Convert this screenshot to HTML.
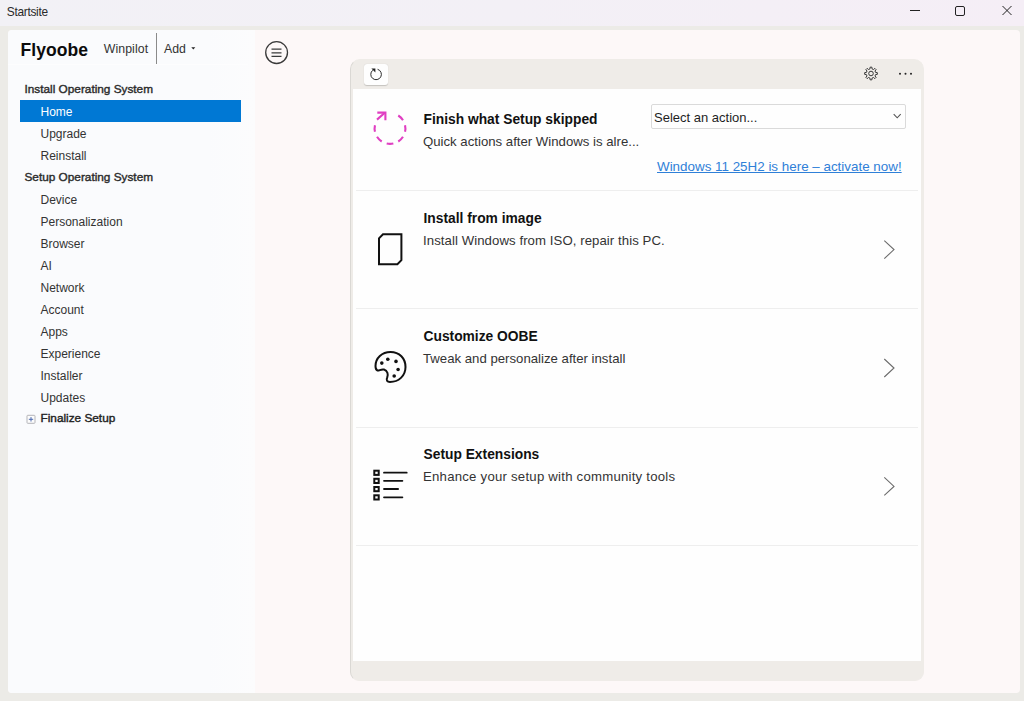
<!DOCTYPE html>
<html><head><meta charset="utf-8">
<style>
*{margin:0;padding:0;box-sizing:border-box}
html,body{width:1024px;height:701px;overflow:hidden;background:#ecebe7;font-family:"Liberation Sans",sans-serif;color:#1b1b1b;position:relative}
div,svg{position:absolute}
span{white-space:pre}
.t{white-space:nowrap;line-height:1}
#title{left:0;top:0;width:1024px;height:26px;background:linear-gradient(90deg,#f2f1f6,#f3f0f6 50%,#f5eef6)}
#panel{left:8px;top:30px;width:1012px;height:663px;background:#fdf8f8;border-radius:4px}
#side{left:8px;top:30px;width:247px;height:663px;background:linear-gradient(90deg,#fafbfd 0,#fafbfd 200px,#fcfcfd 247px);border-radius:4px 0 0 4px}
.item{left:20px;width:221px;height:22px;font-size:12px;color:#333;line-height:24px;padding-left:20.5px;white-space:nowrap}
.grp{line-height:22px;padding-left:4.5px;font-size:11.8px;-webkit-text-stroke:0.4px #2b2b2b;color:#2b2b2b}
.fin{line-height:20.5px;font-size:11.8px;-webkit-text-stroke:0.4px #222;color:#222}
.sel{background:#0078d4;color:#fff}
#card{left:350px;top:59px;width:574px;height:622px;background:#efece8;border-radius:10px 10px 9px 9px;border:1px solid #efece8;border-left-color:#dad8d4}
#content{left:353px;top:89px;width:568px;height:572px;background:#fefefe}
.div{left:356px;width:562px;height:1px;background:#eeeeee}
.ttl{left:423.5px;font-size:13.8px;font-weight:bold;color:#111}
.sub{left:423px;font-size:13.2px;color:#333}
</style></head>
<body>
<div id="title"><div class="t" style="left:6.8px;top:7px;font-size:11.9px;letter-spacing:-0.3px;color:#2a2a2a">Startsite</div></div>
<div id="panel"></div>
<div id="side"></div>
<div style="left:8px;top:64px;width:240px;height:1px;background:#fdfdfe"></div>

<div class="t" style="left:20.5px;top:41.8px;font-size:17.5px;letter-spacing:0.05px;font-weight:bold;color:#0c0c0c">Flyoobe</div>
<div class="t" style="left:103.7px;top:42.5px;font-size:12.3px;letter-spacing:0.1px;color:#333">Winpilot</div>
<div style="left:156px;top:33px;width:1px;height:31px;background:#8a8a8a"></div>
<div class="t" style="left:164px;top:42.5px;font-size:12.3px;color:#333">Add</div>

<div class="item grp" style="top:78px">Install Operating System</div>
<div class="item sel" style="top:100px">Home</div>
<div class="item" style="top:122px">Upgrade</div>
<div class="item" style="top:144px">Reinstall</div>
<div class="item grp" style="top:166px">Setup Operating System</div>
<div class="item" style="top:188px">Device</div>
<div class="item" style="top:210px">Personalization</div>
<div class="item" style="top:232px">Browser</div>
<div class="item" style="top:254px">AI</div>
<div class="item" style="top:276px">Network</div>
<div class="item" style="top:298px">Account</div>
<div class="item" style="top:320px">Apps</div>
<div class="item" style="top:342px">Experience</div>
<div class="item" style="top:364px">Installer</div>
<div class="item" style="top:386px">Updates</div>
<div class="item fin" style="top:408px">Finalize Setup</div>

<div id="card"></div>
<div style="left:364px;top:63.5px;width:24px;height:21px;background:#fefefe;border-radius:3px;box-shadow:0 0.5px 1px rgba(0,0,0,0.18)"></div>
<div id="content"></div>
<div class="div" style="top:190px"></div>
<div class="div" style="top:308px"></div>
<div class="div" style="top:427px"></div>
<div class="div" style="top:545px"></div>

<div class="t ttl" style="top:113.4px">Finish what Setup skipped</div>
<div class="t sub" style="top:134.9px">Quick actions after Windows is alre...</div>
<div style="left:651px;top:104px;width:255px;height:24.5px;border:1px solid #dadada;border-radius:2px;background:#fefefe"></div>
<div class="t" style="left:654px;top:110.6px;font-size:13px;color:#1e1e1e">Select an action...</div>
<div class="t" style="left:657px;top:159.7px;font-size:13.4px;color:#2f80d8;text-decoration:underline">Windows 11 25H2 is here – activate now!</div>

<div class="t ttl" style="top:212px">Install from image</div>
<div class="t sub" style="top:233.5px;letter-spacing:0.07px">Install Windows from ISO, repair this PC.</div>
<div class="t ttl" style="top:329.9px">Customize OOBE</div>
<div class="t sub" style="top:351.9px">Tweak and personalize after install</div>
<div class="t ttl" style="top:448.1px">Setup Extensions</div>
<div class="t sub" style="top:470.3px;letter-spacing:0.23px">Enhance your setup with community tools</div>

<svg style="left:0;top:0" width="1024" height="701">
 <!-- title bar controls -->
 <line x1="910" y1="10.5" x2="920" y2="10.5" stroke="#222" stroke-width="1"/>
 <rect x="955.5" y="6.5" width="9" height="9" rx="1.5" fill="none" stroke="#222" stroke-width="1"/>
 <path d="M1002.5 6 L1011.5 15 M1011.5 6 L1002.5 15" stroke="#222" stroke-width="1"/>
 <!-- add arrow -->
 <path d="M191.3 47.2 L195.3 47.2 L193.3 49.6Z" fill="#222"/>
 <!-- finalize expander -->
 <rect x="27" y="415.3" width="8" height="8" rx="0.8" fill="#fcfcfc" stroke="#b4b4b8" stroke-width="1"/>
 <path d="M28.8 419.3H33.2M31 417.1V421.5" stroke="#4a68b0" stroke-width="1"/>
 <!-- hamburger -->
 <circle cx="276.6" cy="52.6" r="10.9" fill="none" stroke="#3a3a3a" stroke-width="1.3"/>
 <path d="M271.5 49.2H281.5M271.5 52.8H281.5M271.5 56.4H281.5" stroke="#3a3a3a" stroke-width="1.2"/>
 <!-- refresh -->
 <path d="M377.6 69.3 A5.3 5.3 0 1 1 372.7 70.3" fill="none" stroke="#2a2a2a" stroke-width="1"/>
 <path d="M371.4 68.5 L375.4 68.5 L375.4 72.5Z" fill="#222"/>
 <!-- gear -->
 <g transform="translate(871 73.5)" fill="none" stroke="#383838" stroke-width="1">
  <circle r="2.3"/>
  <path d="M-1.06 -4.58 L-0.89 -6.34 L0.89 -6.34 L1.06 -4.58 L2.49 -3.99 L3.85 -5.11 L5.11 -3.85 L3.99 -2.49 L4.58 -1.06 L6.34 -0.89 L6.34 0.89 L4.58 1.06 L3.99 2.49 L5.11 3.85 L3.85 5.11 L2.49 3.99 L1.06 4.58 L0.89 6.34 L-0.89 6.34 L-1.06 4.58 L-2.49 3.99 L-3.85 5.11 L-5.11 3.85 L-3.99 2.49 L-4.58 1.06 L-6.34 0.89 L-6.34 -0.89 L-4.58 -1.06 L-3.99 -2.49 L-5.11 -3.85 L-3.85 -5.11 L-2.49 -3.99Z" stroke-linejoin="round"/>
 </g>
 <!-- dots -->
 <circle cx="900" cy="73.7" r="1" fill="#222"/>
 <circle cx="905.5" cy="73.7" r="1" fill="#222"/>
 <circle cx="911" cy="73.7" r="1" fill="#222"/>
 <!-- row1 icon -->
 <g fill="none" stroke="#e03fc2" stroke-width="2.1">
  <path d="M405.03 125.17A15.4 15.4 0 0 1 405.03 131.83M402.99 136.77A15.4 15.4 0 0 1 398.27 141.49M393.33 143.53A15.4 15.4 0 0 1 386.67 143.53M381.73 141.49A15.4 15.4 0 0 1 377.01 136.77M374.97 131.83A15.4 15.4 0 0 1 374.97 125.17M398.27 115.51A15.4 15.4 0 0 1 402.99 120.23"/>
  <path d="M377 119.6 L384.8 112.8"/>
  <path d="M377.3 112.6 H385.4 V120.2" stroke-linecap="butt"/>
 </g>
 <!-- select chevron -->
 <path d="M893.7 114.2 L897.2 117.8 L900.7 114.2" fill="none" stroke="#555" stroke-width="1.1"/>
 <!-- row chevrons -->
 <path d="M884.3 240.6 L894 249.6 L884.3 258.6" fill="none" stroke="#6b6b6b" stroke-width="1.1"/>
 <path d="M884.3 359 L894 368 L884.3 377" fill="none" stroke="#6b6b6b" stroke-width="1.1"/>
 <path d="M884.3 477.4 L894 486.4 L884.3 495.4" fill="none" stroke="#6b6b6b" stroke-width="1.1"/>
 <!-- image icon -->
 <path d="M383 234.3 H401.4 V260.2 L397.4 264.2 H379 V238.3 Z" fill="none" stroke="#111" stroke-width="2"/>
 <!-- palette -->
 <g transform="translate(374 351)">
  <path d="M1.5 15 C1.5 7 8 1 16.5 1 C25.5 1 31.5 7.5 31.5 16 C31.5 25 24.5 31 16 31 C13 31 12 29 13.2 26.5 C14.5 23.5 13.5 19.5 10 18.5 C7 17.8 5 20 3.5 19.5 C2 19 1.5 17 1.5 15 Z" fill="none" stroke="#111" stroke-width="2"/>
  <circle cx="7.8" cy="12.1" r="1.8" fill="#111"/>
  <circle cx="13.8" cy="8.3" r="1.8" fill="#111"/>
  <circle cx="22" cy="10.4" r="1.8" fill="#111"/>
  <circle cx="24.1" cy="18.5" r="1.8" fill="#111"/>
  <circle cx="20.2" cy="25" r="1.8" fill="#111"/>
 </g>
 <!-- list icon -->
 <g fill="none" stroke="#111" stroke-width="2">
  <rect x="374.3" y="470.7" width="4.4" height="4.2"/>
  <rect x="374.3" y="478.8" width="4.4" height="4.2"/>
  <rect x="374.3" y="487" width="4.4" height="4.2"/>
  <rect x="374.3" y="495.3" width="4.4" height="4.2"/>
  <path d="M384 472.7H406.7M384 480.8H402.4M384 489H398.1M384 497.3H402.4" stroke-width="1.8" stroke-linecap="round"/>
 </g>
</svg>
</body></html>
